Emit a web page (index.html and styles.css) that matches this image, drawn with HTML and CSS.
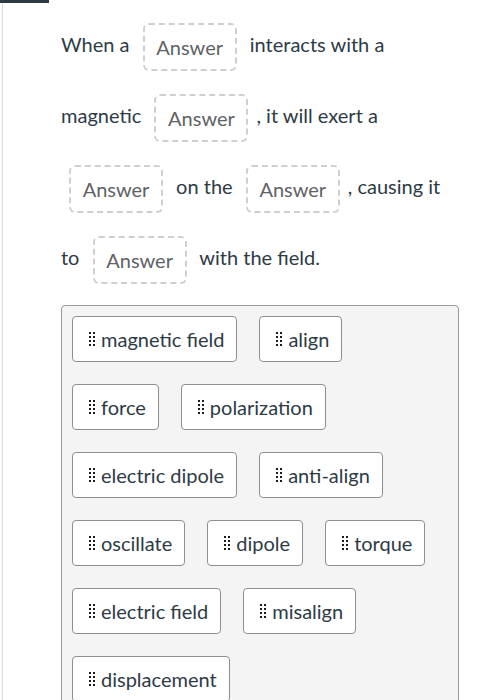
FILE: index.html
```html
<!DOCTYPE html>
<html>
<head>
<meta charset="utf-8">
<link rel="stylesheet" href="styles.css">
</head>
<body>
<div class="topbar"></div>
<div class="page">
  <div class="question">
    <div class="line">When a <span class="blank">Answer</span> interacts with a</div>
    <div class="line">magnetic <span class="blank">Answer</span>, it will exert a</div>
    <div class="line"><span class="blank">Answer</span> on the <span class="blank">Answer</span>, causing it</div>
    <div class="line">to <span class="blank">Answer</span> with the field.</div>
  </div>
  <div class="bank">
    <div class="row">
      <div class="chip"><span class="grip"></span>magnetic field</div>
      <div class="chip"><span class="grip"></span>align</div>
    </div>
    <div class="row">
      <div class="chip"><span class="grip"></span>force</div>
      <div class="chip"><span class="grip"></span>polarization</div>
    </div>
    <div class="row">
      <div class="chip"><span class="grip"></span>electric dipole</div>
      <div class="chip"><span class="grip"></span>anti-align</div>
    </div>
    <div class="row">
      <div class="chip"><span class="grip"></span>oscillate</div>
      <div class="chip"><span class="grip"></span>dipole</div>
      <div class="chip"><span class="grip"></span>torque</div>
    </div>
    <div class="row">
      <div class="chip"><span class="grip"></span>electric field</div>
      <div class="chip"><span class="grip"></span>misalign</div>
    </div>
    <div class="row">
      <div class="chip"><span class="grip"></span>displacement</div>
    </div>
  </div>
</div>
</body>
</html>
```
FILE: styles.css
```css
html, body {
  margin: 0;
  padding: 0;
  background: #fff;
}
body {
  font-family: Lato, "Liberation Sans", sans-serif;
  color: #2d3b45;
  overflow: hidden;
}
.topbar {
  width: 49px;
  height: 3px;
  background: #2d3b45;
}
.page {
  margin-left: 2px;
  border-left: 1px solid #dcdcdc;
  padding: 17px 0 0 58px;
  min-height: 700px;
}
.question {
  display: flex;
  flex-direction: column;
  gap: 23px;
}
.line {
  height: 48px;
  line-height: 48px;
  font-size: 20px;
  white-space: nowrap;
}
.blank {
  display: inline-block;
  box-sizing: border-box;
  width: 94px;
  height: 48px;
  line-height: 44px;
  margin: 0 8px;
  border: 2px dashed #cfcfcf;
  border-radius: 6px;
  text-align: center;
  color: #5f6366;
  vertical-align: middle;
}
.bank {
  margin-top: 24px;
  width: 398px;
  box-sizing: border-box;
  background: #f4f4f4;
  border: 1px solid #9a9a9a;
  border-radius: 4px;
  padding: 10px 10px 40px 10px;
  display: flex;
  flex-direction: column;
  gap: 22px;
}
.row {
  display: flex;
  gap: 22px;
}
.chip {
  display: flex;
  align-items: center;
  box-sizing: border-box;
  height: 46px;
  padding: 0 12px 0 15px;
  background: #fff;
  border: 1px solid #8f8f8f;
  border-radius: 4px;
  font-size: 20px;
  color: #2d3b45;
  white-space: nowrap;
}
.grip {
  width: 8px;
  height: 16px;
  margin-right: 5px;
  background-image: radial-gradient(circle, #1a1a1a 1.2px, transparent 1.5px);
  background-size: 4px 4px;
  flex-shrink: 0;
}
```
